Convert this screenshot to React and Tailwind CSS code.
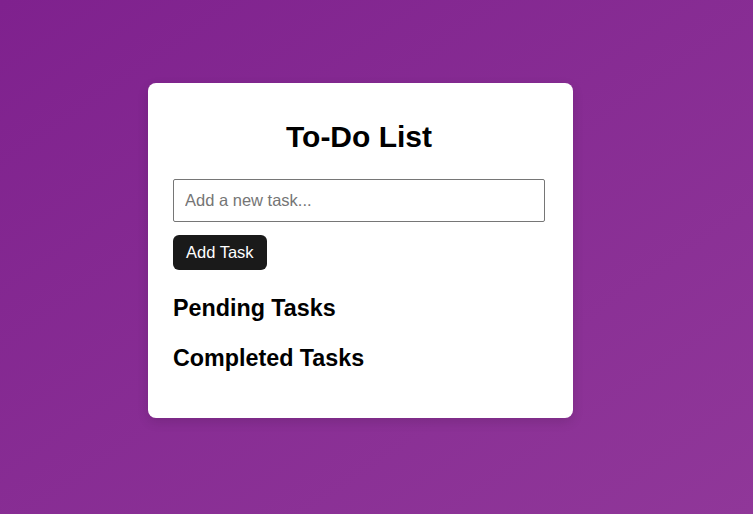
import React, { useState } from 'react';

const App = () => {
  const [input, setInput] = useState('');
  const [tasks, setTasks] = useState([]);

  const addTask = () => {
    if (!input.trim()) return;
    setTasks(prev => [...prev, { text: input, done: false }]);
    setInput('');
  };

  const pending = tasks.filter(t => !t.done);
  const completed = tasks.filter(t => t.done);

  return (
    <div
      className="min-h-screen w-full bg-linear-to-br from-[#7f218e] to-[#903799] pl-[148px] pt-[83px]"
      style={{ fontFamily: '"Liberation Sans", Arial, sans-serif' }}
    >
      <div className="w-[425px] rounded-lg bg-white pl-[25px] pr-[28px] pt-[36px] pb-[46px] shadow-[0_4px_12px_rgba(0,0,0,0.12)]">
        {/* Header */}
        <h1 className="text-center text-[30px] leading-[35px] font-bold text-black">To-Do List</h1>

        {/* Input */}
        <input
          type="text"
          value={input}
          onChange={(e) => setInput(e.target.value)}
          placeholder="Add a new task..."
          className="mt-[25px] block h-[43px] w-full rounded-[2px] border border-[#767676] bg-white px-[11px] text-[16.5px] text-black placeholder-[#757575] outline-none"
        />
        <button
          onClick={addTask}
          className="mt-[13px] block h-[35px] rounded-md bg-[#1a1a1a] px-[13px] text-[16.5px] text-white"
        >
          Add Task
        </button>

        {/* Lists */}
        <h2 className="mt-[25px] text-[23.3px] leading-[27px] font-bold text-black">Pending Tasks</h2>
        <ul>
          {pending.map((t, i) => (
            <li key={i} className="py-1 text-base">{t.text}</li>
          ))}
        </ul>
        <h2 className="mt-[23px] text-[23.3px] leading-[27px] font-bold text-black">Completed Tasks</h2>
        <ul>
          {completed.map((t, i) => (
            <li key={i} className="py-1 text-base line-through">{t.text}</li>
          ))}
        </ul>
      </div>
    </div>
  );
};

export default App;
